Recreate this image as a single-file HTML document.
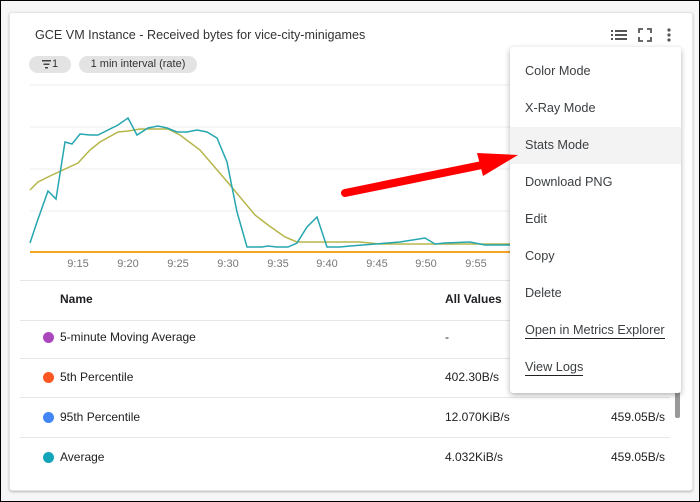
<!DOCTYPE html>
<html><head><style>
body{margin:0;width:700px;height:502px;overflow:hidden;background:#f6f6f6;font-family:"Liberation Sans",sans-serif;position:relative}
.frame{position:absolute;left:0;top:0;width:698px;height:500px;border:1px solid #000;}
.card{position:absolute;left:9px;top:12px;width:682px;height:477px;background:#fff;border:1px solid #e4e4e4;border-radius:3px;box-shadow:0 1px 2px rgba(0,0,0,.25)}
.t{position:absolute;white-space:nowrap;color:#202124}
.chip{position:absolute;top:56px;height:17px;background:#e3e3e3;border-radius:9px;font-size:11px;line-height:17px;color:#333;text-align:center}
.menu{position:absolute;left:510px;top:47px;width:171px;height:346px;background:#fff;border-radius:3px;box-shadow:0 2px 6px rgba(0,0,0,.3)}
.mi{position:absolute;left:15px;font-size:12.7px;color:#3c4043}
.hl{position:absolute;left:0;top:80px;width:171px;height:37px;background:#f3f3f3}
.sep{position:absolute;left:20px;width:650px;height:1px;background:#e6e6e6}
.dot{position:absolute;left:43px;width:11px;height:11px;border-radius:50%}
.c{font-size:12px}
</style></head><body>
<div class="frame"></div>
<div class="card"></div>
<div class="t" style="left:35px;top:28px;font-size:12.6px;color:#333">GCE VM Instance - Received bytes for vice-city-minigames</div>
<div class="chip" style="left:29px;width:42px"><span style="margin-left:10px">1</span></div>
<div class="chip" style="left:79px;width:118px">1 min interval (rate)</div>
<svg style="position:absolute;left:0;top:0" width="700" height="502">
<g fill="#444"><rect x="42" y="60" width="9" height="1.5"/><rect x="43.5" y="63.5" width="6" height="1.5"/><rect x="45" y="67" width="3" height="1.5"/></g>
<g stroke="#ececec" stroke-width="1">
<line x1="30" y1="85" x2="510" y2="85"/><line x1="30" y1="127" x2="510" y2="127"/><line x1="30" y1="169" x2="510" y2="169"/><line x1="30" y1="211" x2="510" y2="211"/>
</g>
<line x1="30" y1="252" x2="510" y2="252" stroke="#f5a623" stroke-width="2"/>
<polyline fill="none" stroke="#b5b548" stroke-width="1.5" points="30,190 38,182 50,176 78,163 90,150 100,142 118,132 128,131 140,129 168,129 180,135 200,150 230,185 255,215 268,225 285,237 297,242 330,242 360,242 380,244 510,244"/>
<polyline fill="none" stroke="#26a6b0" stroke-width="1.5" points="30,243 37,222 48,191 56,199 65,142 72,144 80,134 90,135 98,135 118,125 128,118 137,135 148,128 158,126 167,128 177,132 187,132 197,130 207,132 217,138 227,162 237,212 247,247 262,247 268,246 277,247 288,247 297,243 307,227 317,217 327,247 340,247 350,246 400,242 425,238 435,244 445,243 470,242 485,245 510,245"/>
<g fill="#777" font-size="11" font-family="Liberation Sans" text-anchor="middle">
<text x="78" y="267">9:15</text><text x="128" y="267">9:20</text><text x="178" y="267">9:25</text><text x="228" y="267">9:30</text><text x="278" y="267">9:35</text><text x="327" y="267">9:40</text><text x="377" y="267">9:45</text><text x="426" y="267">9:50</text><text x="476" y="267">9:55</text>
</g>
<g fill="#555"><rect x="611" y="30" width="2" height="2"/><rect x="615" y="30" width="12" height="2"/><rect x="611" y="34" width="2" height="2"/><rect x="615" y="34" width="12" height="2"/><rect x="611" y="38" width="2" height="2"/><rect x="615" y="38" width="12" height="2"/>
<circle cx="669" cy="30" r="1.6"/><circle cx="669" cy="35" r="1.6"/><circle cx="669" cy="40" r="1.6"/></g>
<path d="M639 33v-4h4M647 29h4v4M651 37v4h-4M643 41h-4v-4" fill="none" stroke="#555" stroke-width="1.8"/>
</svg>
<div class="sep" style="top:280px"></div>
<div class="t" style="left:60px;top:292px;font-size:12px;font-weight:bold">Name</div>
<div class="t" style="left:445px;top:292px;font-size:12px;font-weight:bold">All Values</div>
<div class="sep" style="top:320px"></div><div class="sep" style="top:358px"></div><div class="sep" style="top:397px"></div><div class="sep" style="top:437px"></div>
<div class="dot" style="top:332px;background:#ab47bc"></div><div class="t c" style="left:60px;top:330px">5-minute Moving Average</div><div class="t c" style="left:445px;top:330px">-</div>
<div class="dot" style="top:372px;background:#ff5722"></div><div class="t c" style="left:60px;top:370px">5th Percentile</div><div class="t c" style="left:445px;top:370px">402.30B/s</div>
<div class="dot" style="top:412px;background:#4285f4"></div><div class="t c" style="left:60px;top:410px">95th Percentile</div><div class="t c" style="left:445px;top:410px">12.070KiB/s</div><div class="t c" style="left:611px;top:410px">459.05B/s</div>
<div class="dot" style="top:452px;background:#12a4b8"></div><div class="t c" style="left:60px;top:450px">Average</div><div class="t c" style="left:445px;top:450px">4.032KiB/s</div><div class="t c" style="left:611px;top:450px">459.05B/s</div>
<div style="position:absolute;left:675px;top:390px;width:5px;height:28px;background:#999;border-radius:2px"></div>
<div class="menu">
<div class="hl"></div>
<div class="mi" style="top:17px">Color Mode</div>
<div class="mi" style="top:54px">X-Ray Mode</div>
<div class="mi" style="top:91px">Stats Mode</div>
<div class="mi" style="top:128px">Download PNG</div>
<div class="mi" style="top:165px">Edit</div>
<div class="mi" style="top:202px">Copy</div>
<div class="mi" style="top:239px">Delete</div>
<div class="mi" style="top:276px;border-bottom:1px solid #222;padding-bottom:1px">Open in Metrics Explorer</div>
<div class="mi" style="top:313px;border-bottom:1px solid #222;padding-bottom:1px">View Logs</div>
</div>
<svg style="position:absolute;left:0;top:0" width="700" height="502">
<line x1="345" y1="193" x2="482" y2="165" stroke="#f00" stroke-width="8" stroke-linecap="round"/>
<polygon points="477,153 518,155 483,176" fill="#f00"/>
</svg>
</body></html>
